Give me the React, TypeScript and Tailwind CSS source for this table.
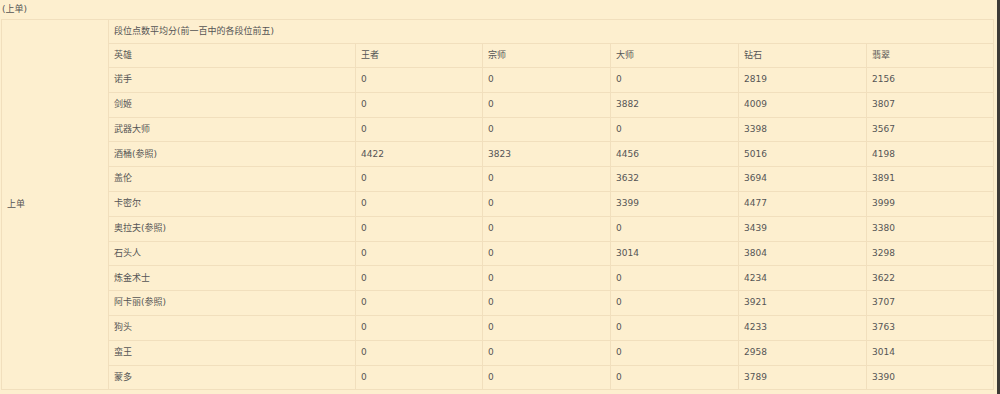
const ranks = ["王者", "宗师", "大师", "钻石", "翡翠"];

const heroes: [string, number[]][] = [
  ["诺手", [0, 0, 0, 2819, 2156]],
  ["剑姬", [0, 0, 3882, 4009, 3807]],
  ["武器大师", [0, 0, 0, 3398, 3567]],
  ["酒桶(参照)", [4422, 3823, 4456, 5016, 4198]],
  ["盖伦", [0, 0, 3632, 3694, 3891]],
  ["卡密尔", [0, 0, 3399, 4477, 3999]],
  ["奥拉夫(参照)", [0, 0, 0, 3439, 3380]],
  ["石头人", [0, 0, 3014, 3804, 3298]],
  ["炼金术士", [0, 0, 0, 4234, 3622]],
  ["阿卡丽(参照)", [0, 0, 0, 3921, 3707]],
  ["狗头", [0, 0, 0, 4233, 3763]],
  ["蛮王", [0, 0, 0, 2958, 3014]],
  ["蒙多", [0, 0, 0, 3789, 3390]],
];

const cell = "border border-[#f1dfbd] px-[5px] py-0 text-left align-middle font-normal";

export default function App() {
  return (
    <div
      className="h-[394px] w-[1000px] overflow-hidden border-r-[3px] border-[#3d3a36] bg-[#fdefcf] text-[9px] text-[#555]"
      style={{ fontFamily: '"DejaVu Sans", Verdana, "Noto Sans CJK SC", sans-serif' }}
    >
      <p className="h-[19px] pl-[2px] pt-[2px] leading-[14px]">(上单)</p>
      <table className="ml-[1px] w-[993px] table-fixed border-collapse">
        <colgroup>
          <col className="w-[107px]" />
          <col className="w-[247px]" />
          <col className="w-[127px]" />
          <col className="w-[128px]" />
          <col className="w-[128px]" />
          <col className="w-[128px]" />
          <col className="w-[127px]" />
        </colgroup>
        <tbody>
          <tr className="h-[24px]">
            <td rowSpan={15} className={cell}>上单</td>
            <td colSpan={6} className={cell}>段位点数平均分(前一百中的各段位前五)</td>
          </tr>
          <tr className="h-[24px]">
            <td className={cell}>英雄</td>
            {ranks.map((r) => (
              <td key={r} className={cell}>{r}</td>
            ))}
          </tr>
          {heroes.map(([name, vals]) => (
            <tr key={name} className="h-[24.8px]">
              <td className={cell}>{name}</td>
              {vals.map((v, i) => (
                <td key={i} className={cell}>{v}</td>
              ))}
            </tr>
          ))}
        </tbody>
      </table>
    </div>
  );
}
